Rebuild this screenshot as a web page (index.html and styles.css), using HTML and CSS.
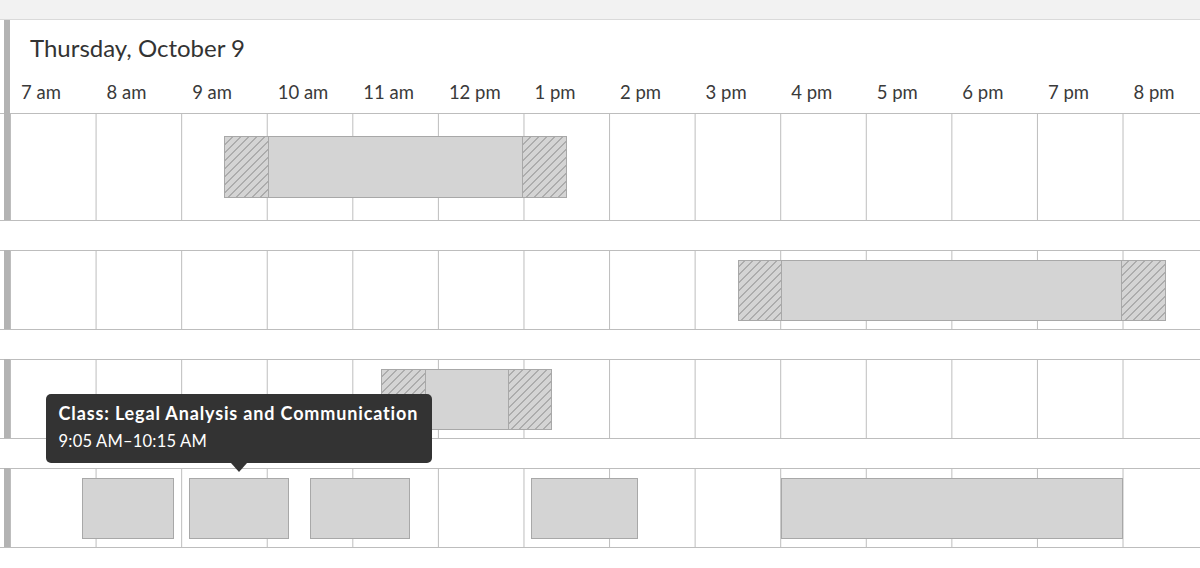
FILE: index.html
```html
<!DOCTYPE html>
<html lang="en">
<head>
<meta charset="utf-8">
<title>Schedule</title>
<link rel="stylesheet" href="styles.css">
</head>
<body>
<div class="topbar"></div>
<main class="schedule">
  <section class="day day--first">
    <div class="bar"></div>
    <header class="day-head">
      <h2 class="day-title">Thursday, October 9</h2>
      <div class="hours">
        <span class="hour">7 am</span><span class="hour">8 am</span><span class="hour">9 am</span><span class="hour">10 am</span><span class="hour">11 am</span><span class="hour">12 pm</span><span class="hour">1 pm</span><span class="hour">2 pm</span><span class="hour">3 pm</span><span class="hour">4 pm</span><span class="hour">5 pm</span><span class="hour">6 pm</span><span class="hour">7 pm</span><span class="hour">8 pm</span>
      </div>
    </header>
    <div class="track track--first">
      <div class="lane lane--tall">
        <div class="event event--split" style="left:213.95px;width:342.32px"><span class="hatch"></span><span class="core"></span><span class="hatch"></span></div>
      </div>
    </div>
  </section>

  <section class="day">
    <div class="bar"></div>
    <div class="track">
      <div class="lane">
        <div class="event event--split" style="left:727.43px;width:427.9px"><span class="hatch"></span><span class="core"></span><span class="hatch"></span></div>
      </div>
    </div>
  </section>

  <section class="day">
    <div class="bar"></div>
    <div class="track">
      <div class="lane">
        <div class="event event--split" style="left:370.85px;width:171.16px"><span class="hatch"></span><span class="core"></span><span class="hatch"></span></div>
      </div>
    </div>
  </section>

  <section class="day">
    <div class="bar"></div>
    <div class="track">
      <div class="lane">
        <div class="event" style="left:71.32px;width:92.71px"></div>
        <div class="event" style="left:178.29px;width:99.85px">
          <div class="tooltip" role="tooltip">
            <div class="tooltip-title">Class: Legal Analysis and Communication</div>
            <div class="tooltip-time">9:05 AM–10:15 AM</div>
          </div>
        </div>
        <div class="event" style="left:299.53px;width:99.85px"></div>
        <div class="event" style="left:520.61px;width:106.98px"></div>
        <div class="event" style="left:770.22px;width:342.32px"></div>
      </div>
    </div>
  </section>
</main>
</body>
</html>
```

FILE: styles.css
```css
html, body {
  margin: 0;
  padding: 0;
  background: #ffffff;
}

body {
  font-family: Lato, "Open Sans", sans-serif;
  color: #333333;
  overflow: hidden;
}

.topbar {
  height: 19px;
  background: #f2f2f2;
  border-bottom: 1px solid #dadada;
}

.schedule {
  overflow: hidden;
}

.day {
  display: grid;
  grid-template-columns: 4px 6.4px 1fr;
  border-bottom: 1px solid #bdbdbd;
  margin-bottom: 29px;
}

.day--first {
  grid-template-rows: auto auto;
}

.bar {
  grid-column: 2;
  grid-row: 1 / -1;
  background: #b3b3b3;
  z-index: 1;
}

.day-head {
  grid-column: 3;
  grid-row: 1;
  padding: 13px 0 9px;
  min-width: 0;
}

.day-title {
  margin: 0 0 17px;
  padding-left: 19.6px;
  font-size: 24px;
  line-height: 30px;
  font-weight: 400;
  color: #333333;
}

.hours {
  display: grid;
  grid-template-columns: repeat(14, 85.58px);
}

.hour {
  padding-left: 10.6px;
  font-size: 18.5px;
  line-height: 24px;
  color: #3a3a3a;
  white-space: nowrap;
}

.track {
  grid-column: 1 / -1;
  grid-row: 1;
  border-top: 1px solid #bdbdbd;
  padding-left: 10.4px;
}

.track--first {
  grid-row: 2;
}

.lane {
  position: relative;
  height: 78px;
  background-image: linear-gradient(to right, #bdbdbd 0, #bdbdbd 1px, transparent 1px);
  background-size: 85.58px 100%;
  background-repeat: repeat-x;
}

.lane--tall {
  height: 106px;
}

.event {
  position: absolute;
  top: 50%;
  height: 61px;
  margin-top: -30.5px;
  box-sizing: border-box;
  background: #d4d4d4;
  border: 1px solid #a8a8a8;
}

.lane--tall .event {
  height: 62px;
  margin-top: -31px;
}

.event--split {
  display: flex;
}

.hatch {
  flex: 0 0 42.3px;
  background: repeating-linear-gradient(-45deg, #d4d4d4 0, #d4d4d4 4.6px, #acacac 4.6px, #acacac 5.66px);
}

.hatch:first-child {
  border-right: 1px solid #a8a8a8;
}

.hatch:last-child {
  border-left: 1px solid #a8a8a8;
}

.core {
  flex: 1 1 auto;
}

.tooltip {
  position: absolute;
  left: 50%;
  bottom: calc(100% + 16px);
  transform: translateX(-50%);
  z-index: 10;
  box-sizing: border-box;
  width: 386px;
  padding: 7px 13px 10px;
  background: #333333;
  border-radius: 5px;
  color: #ffffff;
  white-space: nowrap;
}

.tooltip::after {
  content: "";
  position: absolute;
  top: 100%;
  left: 50%;
  margin-left: -8px;
  border-left: 8px solid transparent;
  border-right: 8px solid transparent;
  border-top: 9px solid #333333;
}

.tooltip-title {
  font-size: 18px;
  line-height: 24px;
  font-weight: 700;
  letter-spacing: 0.85px;
}

.tooltip-time {
  margin-top: 4px;
  font-size: 16.5px;
  line-height: 24px;
  font-weight: 400;
  letter-spacing: 0.2px;
}
```
